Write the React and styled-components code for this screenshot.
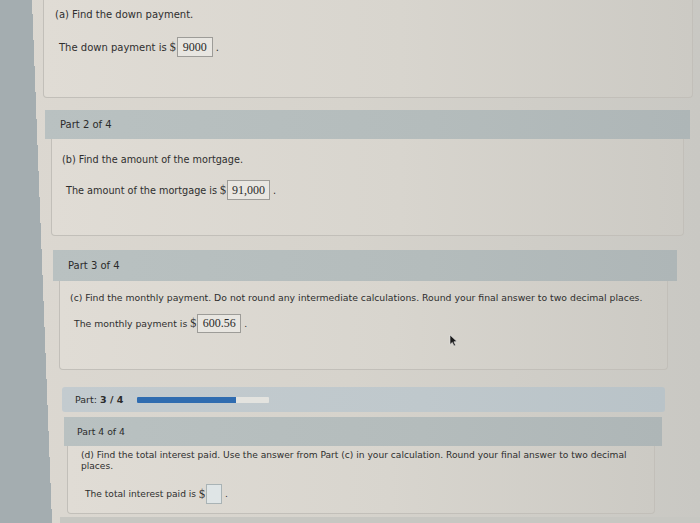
import React from 'react';
import styled, { createGlobalStyle } from 'styled-components';

const GlobalStyle = createGlobalStyle`
    html, body {
        margin: 0;
        height: 523px;
        overflow: hidden;
    }

    body {
        font-family: "DejaVu Sans", Verdana, sans-serif;
        color: #2e2e2e;
        background:
            linear-gradient(87.8deg, #a4adb0 0 52px, transparent 52px),
            linear-gradient(to right, #dcd8d1 0%, #d6d3cc 50%, #c9c8c3 100%);
    }
`;

const Page = styled.main`
    position: relative;
    display: flex;
    flex-direction: column;
    height: 523px;
`;

const Card = styled.section`
    display: flex;
    flex-direction: column;
    margin: ${(p) => p.$top}px ${(p) => p.$right}px 0 ${(p) => p.$left}px;
`;

const Header = styled.div`
    display: flex;
    align-items: center;
    gap: ${(p) => p.$gap || 8}px;
    height: ${(p) => p.$h}px;
    padding-left: ${(p) => p.$pl}px;
    background: ${(p) => p.$bg || 'linear-gradient(to right, #b9c1c1, #b4bcbc 60%, #aeb6b7)'};
    border-radius: ${(p) => (p.$round ? '3px' : '0')};
    font-size: ${(p) => p.$fs || 10}px;
    color: #2b2b2b;
`;

const Body = styled.div`
    box-sizing: border-box;
    height: ${(p) => p.$h}px;
    margin: 0 ${(p) => p.$ir}px 0 ${(p) => p.$il}px;
    padding: ${(p) => p.$pt}px 12px 0 ${(p) => p.$pl}px;
    border: 1px solid #c2bfb9;
    border-top: none;
    border-radius: 0 0 4px 4px;
    background: linear-gradient(to right, #e0dcd5, #d8d5ce 55%, #cccac4);
    font-size: ${(p) => p.$fs || 10}px;
`;

const Question = styled.p`
    margin: 0;
    font-size: inherit;
    line-height: ${(p) => p.$lh || 12}px;
`;

const AnswerRow = styled.div`
    display: flex;
    align-items: center;
    margin-top: ${(p) => p.$mt}px;
    padding-left: 4px;
    font-size: inherit;
`;

const Dollar = styled.span`
    margin-left: 3px;
    margin-right: 1px;
    font-family: "Liberation Serif", "Times New Roman", serif;
    font-size: 12px;
`;

const AnswerBox = styled.span`
    box-sizing: border-box;
    display: inline-flex;
    align-items: center;
    justify-content: center;
    width: ${(p) => p.$w}px;
    height: ${(p) => p.$h || 20}px;
    border: 1px solid ${(p) => (p.$empty ? '#a9b3b5' : '#9d9c98')};
    background: ${(p) => (p.$empty ? '#dfe5e6' : '#e8e6e1')};
    font-family: "Liberation Serif", "Times New Roman", serif;
    font-size: 12px;
    color: #2a2a2a;
`;

const Period = styled.span`
    margin-left: 3px;
`;

const Bold = styled.b`
    font-weight: bold;
`;

const Track = styled.div`
    width: 132px;
    height: 6px;
    background: #e3e3df;
    border-radius: 1px;
    overflow: hidden;
`;

const Fill = styled.div`
    height: 100%;
    background: #2f6cb0;
`;

const Footer = styled.div`
    height: 12px;
    margin: 3px 0 0 60px;
    background: #c7c7c2;
`;

const Cursor = styled.svg`
    position: absolute;
    left: 449px;
    top: 334px;
`;

const Answer = ({ label, value, w, h, mt, empty }) => (
    <AnswerRow $mt={mt}>
        {label}
        <Dollar>$</Dollar>
        <AnswerBox $w={w} $h={h} $empty={empty}>{value}</AnswerBox>
        <Period>.</Period>
    </AnswerRow>
);

const App = () => {
    const done = 3;
    const total = 4;

    return (
        <>
            <GlobalStyle />
            <Page>
                <Card $top={0} $left={43} $right={7}>
                    <Body $h={98} $il={0} $ir={0} $pt={9} $pl={11}>
                        <Question>(a) Find the down payment.</Question>
                        <Answer label="The down payment is" value="9000" w={36} mt={16} />
                    </Body>
                </Card>

                <Card $top={12} $left={45} $right={10}>
                    <Header $h={29} $pl={15}>Part 2 of 4</Header>
                    <Body $h={97} $il={6} $ir={6} $pt={15} $pl={10} $fs={9.7}>
                        <Question>(b) Find the amount of the mortgage.</Question>
                        <Answer label="The amount of the mortgage is" value="91,000" w={43} mt={14} />
                    </Body>
                </Card>

                <Card $top={14} $left={53} $right={23}>
                    <Header $h={31} $pl={15}>Part 3 of 4</Header>
                    <Body $h={89} $il={6} $ir={9} $pt={11} $pl={10} $fs={9.3}>
                        <Question>
                            (c) Find the monthly payment. Do not round any intermediate calculations. Round your final answer to two decimal places.
                        </Question>
                        <Answer label="The monthly payment is" value="600.56" w={44} h={19} mt={10} />
                    </Body>
                </Card>

                <Card $top={17} $left={62} $right={35}>
                    <Header $h={25} $pl={13} $gap={14} $round $fs={9.5} $bg="linear-gradient(to right, #c3cbcf, #bfc8cc 60%, #b9c3c8)">
                        <span>Part: <Bold>{done} / {total}</Bold></span>
                        <Track>
                            <Fill style={{ width: `${(done / total) * 100}%` }} />
                        </Track>
                    </Header>
                </Card>

                <Card $top={5} $left={64} $right={38}>
                    <Header $h={29} $pl={13} $fs={9.3}>Part 4 of 4</Header>
                    <Body $h={68} $il={3} $ir={7} $pt={4} $pl={13} $fs={9.1}>
                        <Question $lh={11}>
                            (d) Find the total interest paid. Use the answer from Part (c) in your calculation. Round your final answer to two decimal places.
                        </Question>
                        <Answer label="The total interest paid is" value="" w={16} mt={12} empty />
                    </Body>
                </Card>

                <Footer />

                <Cursor width="9" height="13" viewBox="0 0 9 13">
                    <path d="M1 1 L1 10.5 L3.3 8.4 L5 12 L6.6 11.3 L4.9 7.8 L8 7.6 Z" fill="#1b1b1b" stroke="#e8e8e8" strokeWidth="0.6" />
                </Cursor>
            </Page>
        </>
    );
};

export default App;
